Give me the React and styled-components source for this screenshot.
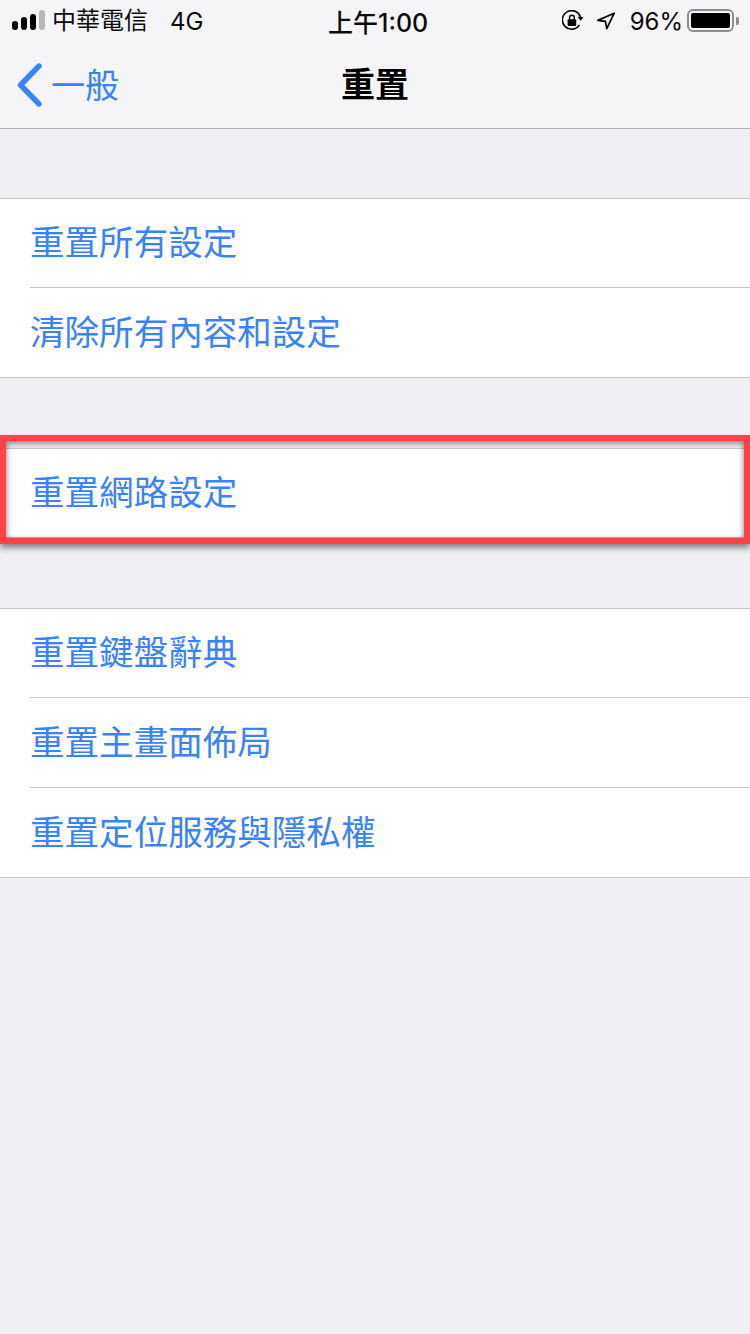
import React from 'react';
import styled, { createGlobalStyle } from 'styled-components';

const GlobalStyle = createGlobalStyle`
	html, body {
		margin: 0;
		padding: 0;
		background: #efeff4;
	}
	body {
		font-family: Inter, "Noto Sans CJK TC", sans-serif;
	}
`;

const Page = styled.div`
	width: 750px;
	height: 1334px;
	overflow: hidden;
	background: #efeff4;
`;

const Header = styled.header`
	height: 128px;
	background: #f5f5f8;
	border-bottom: 1px solid #b2b2b2;
`;

const StatusBar = styled.div`
	position: relative;
	height: 40px;
	display: flex;
	align-items: center;
	justify-content: space-between;
	padding: 0 16px 0 12px;
	color: #0a0a0a;
	font-size: 24px;
`;

const StatusGroup = styled.div`
	display: flex;
	align-items: center;
`;

const Signal = styled.div`
	display: flex;
	align-items: flex-end;
	gap: 3px;
	height: 20px;
	margin-right: 7px;
`;

const SignalBar = styled.span`
	width: 6px;
	height: ${(props) => props.$height}px;
	border-radius: 3px;
	background: ${(props) => (props.$off ? '#b8b8ba' : '#000')};
`;

const Carrier = styled.span`
	margin-right: 22px;
	margin-bottom: 3px;
`;

const Network = styled.span`
	margin-top: 2px;
`;

const Clock = styled.span`
	position: absolute;
	left: 328px;
	top: 3px;
	font-weight: 500;
	font-size: 25px;
`;

const StatusIcon = styled.span`
	display: flex;
	margin-top: 2px;
	margin-left: ${(props) => props.$gap || 0}px;
`;

const Percent = styled.span`
	margin: 2px 4px 0 14px;
	font-size: 24px;
`;

const Battery = styled.div`
	width: 47px;
	height: 23px;
	box-sizing: border-box;
	border: 2px solid #8e8e90;
	border-radius: 6px;
	padding: 2px;
	position: relative;

	&::before {
		content: '';
		display: block;
		height: 100%;
		border-radius: 2px;
		background: #000;
	}

	&::after {
		content: '';
		position: absolute;
		right: -7px;
		top: 6px;
		width: 3px;
		height: 8px;
		border-radius: 0 2px 2px 0;
		background: #8e8e90;
	}
`;

const NavBar = styled.nav`
	position: relative;
	height: 88px;
	display: flex;
	align-items: center;
	justify-content: center;
`;

const BackLink = styled.a`
	position: absolute;
	left: 17px;
	top: 22px;
	display: flex;
	align-items: center;
	gap: 9px;
	color: #3a82f7;
	font-size: 34px;
	line-height: 44px;
`;

const BackLabel = styled.span`
	padding-top: 2px;
`;

const Title = styled.h1`
	margin: 0;
	padding-top: 2px;
	font-size: 34px;
	font-weight: 700;
	color: #000;
	line-height: 44px;
`;

const Content = styled.main`
	padding-top: 69px;
	display: flex;
	flex-direction: column;
	gap: 70px;
`;

const Group = styled.section`
	position: relative;
	background: #fff;
	border-top: 1px solid #c8c7cc;
	border-bottom: 1px solid #c8c7cc;
`;

const Row = styled.div`
	box-sizing: border-box;
	height: 88px;
	padding-bottom: 1px;
	display: flex;
	align-items: center;
	margin-left: 30px;
	color: #3a82f7;
	font-size: 34.55px;
	line-height: 44px;

	& + & {
		height: 90px;
		padding: 1px 0 0;
		border-top: 1px solid #c8c7cc;
	}
`;

const Highlight = styled.div`
	position: absolute;
	left: 0;
	right: 0;
	top: -14px;
	height: 109px;
	box-sizing: border-box;
	border: 6px solid #fc4444;
	box-shadow: 0 4px 6px rgba(0, 0, 0, 0.45), inset 0 3px 6px rgba(0, 0, 0, 0.35),
		inset 2px 0 4px rgba(0, 0, 0, 0.12), inset -2px 0 4px rgba(0, 0, 0, 0.12);
	pointer-events: none;
`;

const LockIcon = () => (
	<svg width="22" height="22" viewBox="1.4 1.4 20.4 20.4" fill="none">
		<path d="M17.6 15.2A8.6 8.6 0 1 1 18.6 8.2" stroke="#000" strokeWidth="1.5" />
		<path d="M15.6 7.6l5.8.2-2.6 3.6z" fill="#000" />
		<rect x="6.6" y="10" width="8" height="6.2" rx="1" fill="#000" />
		<path d="M8.4 10.4V8.4a2.2 2.2 0 0 1 4.4 0v2" stroke="#000" strokeWidth="1.3" />
	</svg>
);

const LocationIcon = () => (
	<svg width="20" height="18" viewBox="0 0 20 18" fill="none">
		<path d="M18.2 1.2L1.8 8.4l7.6 1 1.4 7.2z" stroke="#000" strokeWidth="1.7" strokeLinejoin="round" />
	</svg>
);

const Chevron = () => (
	<svg width="25" height="44" viewBox="0 0 25 44" fill="none">
		<path d="M22 3L3.5 22 22 41" stroke="#3a82f7" strokeWidth="5.4" strokeLinecap="round" strokeLinejoin="round" />
	</svg>
);

const groups = [
	{ rows: ['重置所有設定', '清除所有內容和設定'] },
	{ rows: ['重置網路設定'], marked: true },
	{ rows: ['重置鍵盤辭典', '重置主畫面佈局', '重置定位服務與隱私權'] },
];

const App = () => {
	return (
		<Page>
			<GlobalStyle />
			<Header>
				<StatusBar>
					<StatusGroup>
						<Signal>
							<SignalBar $height={9} />
							<SignalBar $height={13} />
							<SignalBar $height={16} />
							<SignalBar $height={20} $off />
						</Signal>
						<Carrier>中華電信</Carrier>
						<Network>4G</Network>
					</StatusGroup>
					<Clock>上午1:00</Clock>
					<StatusGroup>
						<StatusIcon>
							<LockIcon />
						</StatusIcon>
						<StatusIcon $gap={12}>
							<LocationIcon />
						</StatusIcon>
						<Percent>96%</Percent>
						<Battery />
					</StatusGroup>
				</StatusBar>
				<NavBar>
					<BackLink>
						<Chevron />
						<BackLabel>一般</BackLabel>
					</BackLink>
					<Title>重置</Title>
				</NavBar>
			</Header>
			<Content>
				{groups.map((group, index) => {
					return (
						<Group key={index}>
							{group.rows.map((row) => {
								return <Row key={row}>{row}</Row>;
							})}
							{group.marked && <Highlight />}
						</Group>
					);
				})}
			</Content>
		</Page>
	);
};

export default App;
